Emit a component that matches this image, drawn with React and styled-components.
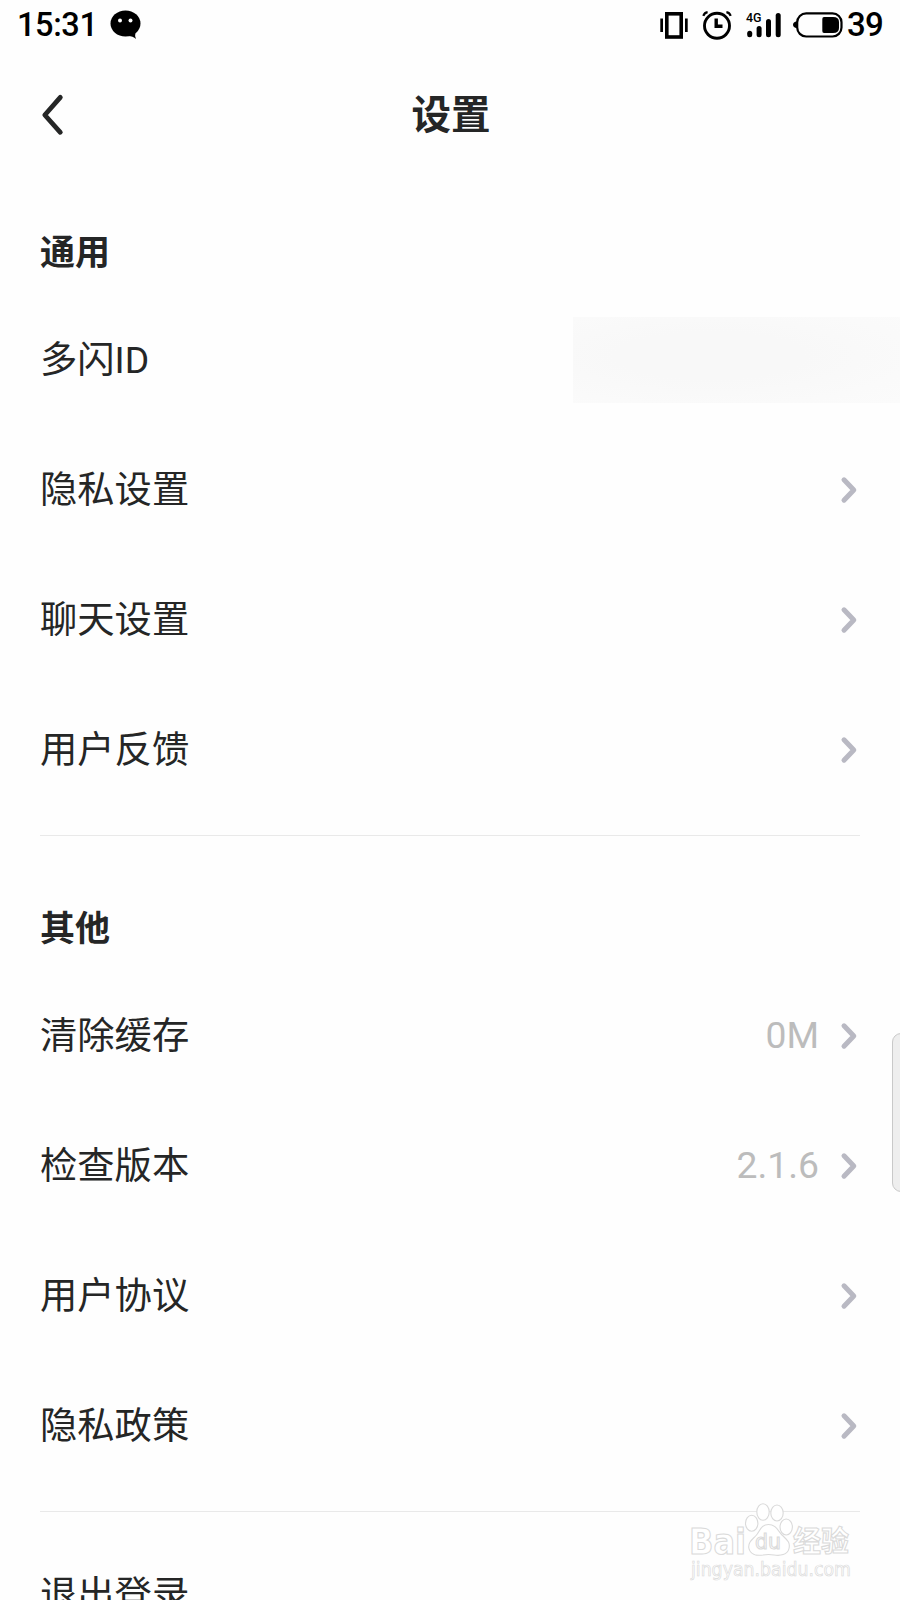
import React from 'react';
import styled, { createGlobalStyle } from 'styled-components';

const general = [
  { label: '多闪ID', hidden: true },
  { label: '隐私设置' },
  { label: '聊天设置' },
  { label: '用户反馈' },
];

const others = [
  { label: '清除缓存', value: '0M' },
  { label: '检查版本', value: '2.1.6' },
  { label: '用户协议' },
  { label: '隐私政策' },
];

const ChatIcon = () => (
  <svg width="32" height="30" viewBox="0 0 32 30">
    <ellipse cx="15.5" cy="13.5" rx="15" ry="13" />
    <path d="M18 26 Q23 26 26 29 Q24.5 26 25.5 22 Z" />
    <circle cx="10" cy="10.5" r="2" fill="#fff" />
    <circle cx="20.5" cy="10.5" r="2" fill="#fff" />
  </svg>
);

const VibrateIcon = () => (
  <svg width="28" height="27" viewBox="0 0 28 27">
    <rect x="6.8" y="1.8" width="14.4" height="23.2" fill="none" stroke="#000" strokeWidth="3.6" />
    <rect x="0.3" y="6.5" width="2.7" height="13.5" />
    <rect x="25" y="6.5" width="2.7" height="13.5" />
  </svg>
);

const AlarmIcon = () => (
  <svg width="30" height="29" viewBox="0 0 30 29">
    <g fill="none" stroke="#000">
      <circle cx="15" cy="14.8" r="12.5" strokeWidth="2.9" />
      <path d="M14.2 7.5 V15.3 H20.5" strokeWidth="3.4" />
      <path d="M1.3 4.8 Q2.5 1.7 5.6 1.2 M24.4 1.2 Q27.5 1.7 28.7 4.8" strokeWidth="2.2" />
    </g>
  </svg>
);

const SignalIcon = () => (
  <svg width="36" height="27" viewBox="0 0 36 27">
    <text x="0" y="10.2" fontFamily="Roboto, sans-serif" fontSize="13.5" fontWeight="500" textLength="15.5" lengthAdjust="spacingAndGlyphs">4G</text>
    <g stroke="#000" strokeWidth="5" strokeLinecap="round">
      <path d="M3.7 21.3 V22.7" />
      <path d="M13.1 16.5 V22.7" />
      <path d="M22.5 9.5 V22.7" />
      <path d="M32.2 3.5 V22.7" />
    </g>
  </svg>
);

const BatteryIcon = () => (
  <svg width="50" height="26" viewBox="0 0 50 26">
    <rect x="4.2" y="1.3" width="44.3" height="23.2" rx="9" fill="none" stroke="#000" strokeWidth="2.2" />
    <path d="M4 9.3 Q0 10.2 0 12.8 Q0 15.4 4 16.3 Z" />
    <path d="M31 5 H40 Q46 5 46 10 V16 Q46 21 40 21 H31 Q29.3 21 29.3 19 V7 Q29.3 5 31 5 Z" />
  </svg>
);

const BackIcon = () => (
  <svg width="22" height="42" viewBox="0 0 22 42">
    <path d="M19.3 3.3 L3.8 21 L19.3 38.3" fill="none" stroke="#252626" strokeWidth="4.8" strokeLinecap="round" strokeLinejoin="round" />
  </svg>
);

const Chevron = () => (
  <svg width="16" height="26" viewBox="0 0 16 26">
    <path d="M3 2.8 L12.8 13 L3 23.2" fill="none" stroke="#b9b9c3" strokeWidth="5" strokeLinecap="round" strokeLinejoin="round" />
  </svg>
);

const Watermark = () => (
  <WatermarkSvg width="170" height="84" viewBox="0 0 170 84">
    <g fill="#fff" stroke="#dadada" strokeWidth="1.1">
      <text x="-1" y="50.5" fontFamily="DejaVu Sans, sans-serif" fontSize="36" fontWeight="700" textLength="57" lengthAdjust="spacingAndGlyphs">Bai</text>
      <ellipse cx="61.7" cy="20.3" rx="6.2" ry="8" />
      <ellipse cx="73" cy="9" rx="6.2" ry="8.2" />
      <ellipse cx="87" cy="10" rx="6.2" ry="8" />
      <ellipse cx="96.2" cy="24" rx="6.2" ry="8" />
      <path d="M78.5 21.5 C86 21.5 88 28 92 32 C97 37 100.5 39 99 45.5 C97.5 52 90 53 84 52 C80 51.3 77 51.3 73 52 C66 53 60 51 58.8 45 C58 39 62.5 36.5 66.5 32 C70 28 71 21.5 78.5 21.5 Z" />
      <text x="65" y="46.3" fontFamily="DejaVu Sans, sans-serif" fontSize="21" textLength="26" lengthAdjust="spacingAndGlyphs">du</text>
      <text x="103" y="48.5" fontFamily="Noto Sans CJK SC, sans-serif" fontSize="29" fontWeight="700" textLength="56" lengthAdjust="spacingAndGlyphs">经验</text>
      <text x="1" y="72.5" fontFamily="DejaVu Sans, sans-serif" fontSize="19" strokeWidth="0.7" textLength="160" lengthAdjust="spacingAndGlyphs">jingyan.baidu.com</text>
    </g>
  </WatermarkSvg>
);

const SettingRow = ({ label, value, hidden }) => (
  <Row>
    <Label>{label}</Label>
    {value && <Value>{value}</Value>}
    {hidden ? <HiddenValue /> : <Chevron />}
  </Row>
);

const App = () => {
  return (
    <Screen>
      <GlobalStyle />
      <StatusBar>
        <Clock>15:31</Clock>
        <ChatIcon />
        <StatusIcons>
          <VibrateIcon />
          <AlarmIcon />
          <SignalIcon />
          <BatteryIcon />
        </StatusIcons>
        <BatteryLevel>39</BatteryLevel>
      </StatusBar>

      <Header>
        <BackButton aria-label="返回">
          <BackIcon />
        </BackButton>
        <Title>设置</Title>
      </Header>

      <Section>
        <SectionTitle>通用</SectionTitle>
        {general.map((item) => (
          <SettingRow key={item.label} {...item} />
        ))}
      </Section>
      <Section>
        <SectionTitle>其他</SectionTitle>
        {others.map((item) => (
          <SettingRow key={item.label} {...item} />
        ))}
      </Section>
      <Logout>
        <Label>退出登录</Label>
      </Logout>

      <EdgeHandle />
      <Watermark />
    </Screen>
  );
};

const GlobalStyle = createGlobalStyle`
  * {
    box-sizing: border-box;
  }

  body {
    margin: 0;
    background: #fefefe;
  }

  svg {
    display: block;
    flex-shrink: 0;
    overflow: visible;
  }
`;

const Screen = styled.div`
  position: relative;
  width: 900px;
  height: 1600px;
  overflow: hidden;
  background: #fefefe;
  color: #252626;
  font-family: Roboto, 'Noto Sans CJK SC', sans-serif;
`;

const StatusBar = styled.div`
  display: flex;
  align-items: center;
  height: 50px;
  padding: 0 17px 0 17px;
  color: #000;
`;

const Clock = styled.span`
  width: 93px;
  font-size: 32.5px;
  font-weight: 500;
  line-height: 50px;
  letter-spacing: -0.4px;
`;

const StatusIcons = styled.div`
  display: flex;
  align-items: center;
  gap: 14px;
  margin-left: auto;

  svg:last-child {
    margin-left: -3px;
  }
`;

const BatteryLevel = styled.span`
  margin-left: 4px;
  font-size: 33px;
  font-weight: 500;
  line-height: 50px;
  letter-spacing: -0.8px;
`;

const Header = styled.header`
  display: grid;
  grid-template-columns: 100px 1fr 100px;
  align-items: center;
  height: 130px;
`;

const BackButton = styled.button`
  display: flex;
  width: 100px;
  padding: 0 0 0 41px;
  border: 0;
  background: none;
`;

const Title = styled.h1`
  margin: 0;
  padding: 1px 0 0 2px;
  font-size: 39.5px;
  font-weight: 700;
  line-height: 60px;
  text-align: center;
`;

const Section = styled.section`
  margin: 0 40px;
  padding: 29px 0 20px;
  border-bottom: 1px solid #e9e9e9;

  & + & {
    padding-top: 49px;
  }
`;

const SectionTitle = styled.h2`
  margin: 0;
  height: 86px;
  font-size: 35px;
  font-weight: 700;
  line-height: 90px;
`;

const Row = styled.div`
  display: flex;
  align-items: center;
  height: 130px;
  padding-right: 3px;
`;

const Label = styled.span`
  flex: 1;
  padding-bottom: 1px;
  font-size: 37.3px;
  line-height: 56px;
`;

const Value = styled.span`
  margin-right: 22px;
  padding-bottom: 2px;
  color: #bcbcbc;
  font-size: 37.3px;
`;

const HiddenValue = styled.div`
  width: 327px;
  height: 86px;
  margin-right: -43px;
  background: radial-gradient(ellipse at 42% 45%, #f8f8f8 0 35%, #fafafa 75%, #fbfbfb);
`;

const Logout = styled.div`
  display: flex;
  align-items: center;
  height: 130px;
  margin: 18px 40px 0;
`;

const EdgeHandle = styled.div`
  position: absolute;
  top: 1033px;
  right: -12px;
  width: 20px;
  height: 159px;
  border: 1px solid #c9c9c9;
  border-radius: 9px;
  background: #eee;
`;

const WatermarkSvg = styled.svg`
  position: absolute;
  top: 1503px;
  left: 690px;
`;

export default App;
